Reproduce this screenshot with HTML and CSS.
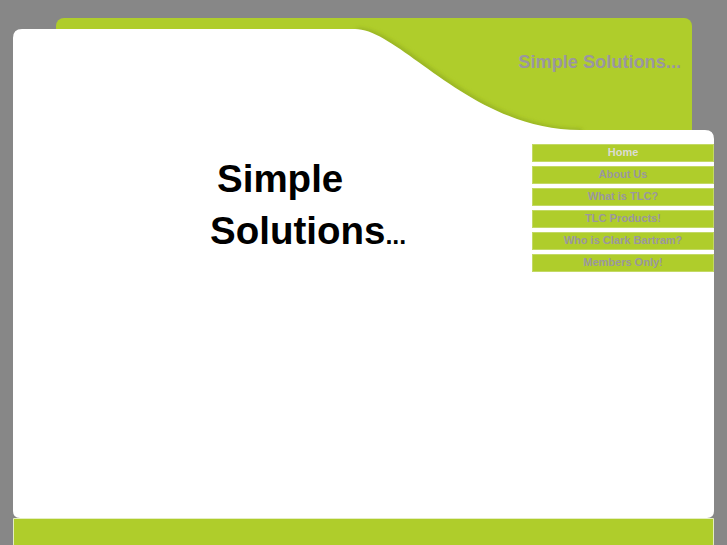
FILE: index.html
```html
<!DOCTYPE html>
<html lang="en">
<head>
<meta charset="utf-8">
<title>Simple Solutions</title>
<link rel="stylesheet" href="styles.css">
</head>
<body>
<div class="page">
  <svg class="backdrop" width="727" height="545" viewBox="0 0 727 545" aria-hidden="true">
    <defs>
      <filter id="soft" x="-10%" y="-10%" width="120%" height="120%">
        <feGaussianBlur stdDeviation="2"/>
      </filter>
    </defs>
    <rect x="56" y="18" width="636" height="150" rx="8" fill="#afcd2b"/>
    <path d="M355,29 C400,29 470,130 580,130" fill="none" stroke="#93ad22" stroke-width="4" filter="url(#soft)" transform="translate(2,1)"/>
    <path d="M13,38 Q13,29 22,29 L355,29 C400,29 470,130 580,130 L705,130 Q714,130 714,139 L714,511 Q714,518 707,518 L20,518 Q13,518 13,511 Z" fill="#ffffff"/>
    <path d="M13.5,518.5 L713.5,518.5 L713.5,544 Q713.5,552 705.5,552 L21.5,552 Q13.5,552 13.5,544 Z" fill="#afcd2b" stroke="#e4eec0" stroke-width="1"/>
  </svg>

  <header class="top">
    <p class="tagline">Simple Solutions...</p>
  </header>

  <div class="body">
    <h1 class="hero">
      <span class="hero-line first">Simple</span>
      <span class="hero-line">Solutions<span class="dots">...</span></span>
    </h1>
    <nav class="menu">
      <a class="menu-item current" href="#">Home</a>
      <a class="menu-item" href="#">About Us</a>
      <a class="menu-item" href="#">What is TLC?</a>
      <a class="menu-item" href="#">TLC Products!</a>
      <a class="menu-item" href="#">Who is Clark Bartram?</a>
      <a class="menu-item" href="#">Members Only!</a>
    </nav>
  </div>
</div>
</body>
</html>
```
FILE: styles.css
```css
* { box-sizing: border-box; }
html, body { margin: 0; padding: 0; }
body {
  background: #878787;
  font-family: "Liberation Sans", Arial, sans-serif;
}
.page {
  position: relative;
  width: 727px;
  height: 545px;
  overflow: hidden;
}
.backdrop {
  position: absolute;
  left: 0;
  top: 0;
  z-index: 0;
}
.top, .body { position: relative; z-index: 1; }
.top {
  height: 144px;
  padding: 53px 46px 0 0;
}
.tagline {
  margin: 0;
  text-align: right;
  font-size: 18.2px;
  line-height: 18px;
  font-weight: bold;
  color: #9a96a0;
}
.body {
  display: flex;
  justify-content: space-between;
  align-items: flex-start;
  padding: 0 13px 0 210px;
}
.hero {
  margin: 9px 0 0;
  font-size: 38.5px;
  line-height: 52px;
  font-weight: bold;
  color: #000;
}
.hero-line { display: block; }
.hero-line.first { padding-left: 7px; }
.dots { font-size: 25px; }
.menu {
  width: 182px;
  display: flex;
  flex-direction: column;
  gap: 4px;
}
.menu-item {
  display: block;
  height: 18px;
  background: #afcd2b;
  border: 1px solid #c3d965;
  text-align: center;
  font-size: 11px;
  line-height: 15px;
  font-weight: bold;
  color: #9a979f;
  text-decoration: none;
}
.menu-item.current { color: #dcdcd4; }
```
